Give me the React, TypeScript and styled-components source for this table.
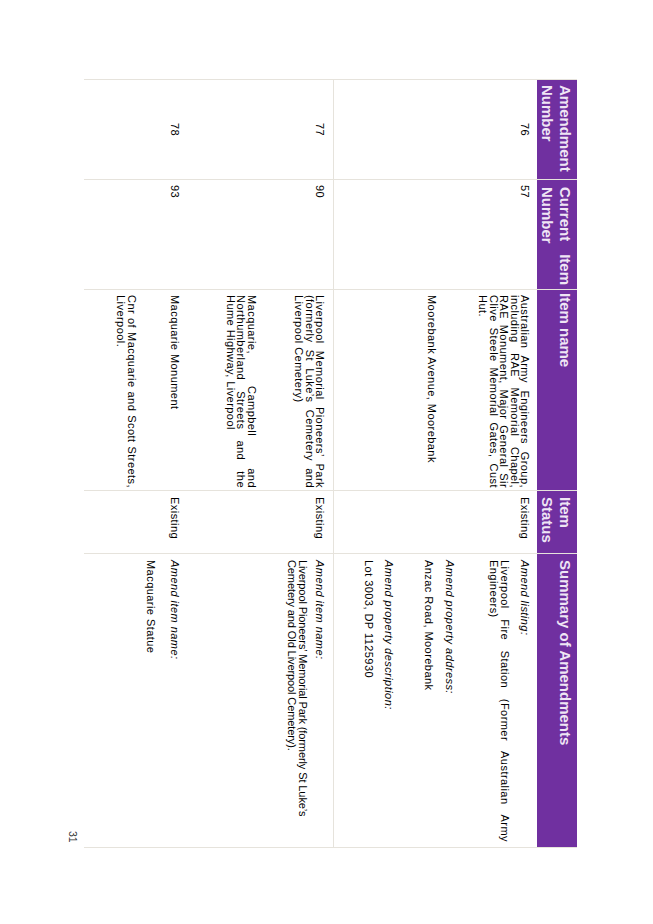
import React from "react";
import styled, { createGlobalStyle } from "styled-components";

const LINE = "#e6e3dc";
const PURPLE = "#7030a0";
const HEAD_TEXT = "#efe5f5";

const GlobalStyle = createGlobalStyle`
  html, body { margin: 0; padding: 0; background: #ffffff; }
  #root { width: 653px; height: 924px; }
`;

const Page = styled.main`
  writing-mode: vertical-rl;
  width: 653px;
  height: 924px;
  box-sizing: border-box;
  padding-block-start: 76px;
  padding-inline-start: 79px;
  background: #ffffff;
  color: #000000;
  font-family: "Liberation Sans", Arial, sans-serif;
  overflow: hidden;
`;

const Table = styled.section`
  inline-size: 769px;
`;

const Row = styled.div<{ $size: number; $pad: number; $divider?: boolean }>`
  --pad: ${(p) => p.$pad}px;
  display: grid;
  grid-template-columns: 100px 110px 201px 63px 295px;
  block-size: ${(p) => p.$size}px;
  box-sizing: border-box;
  border-block-end: ${(p) => (p.$divider ? `1px solid ${LINE}` : "none")};
`;

const Cell = styled.div<{ $center?: boolean; $ps?: number; $pe?: number }>`
  box-sizing: border-box;
  border-inline-start: 1px solid ${LINE};
  padding-block-start: var(--pad);
  padding-inline-start: ${(p) => p.$ps ?? 5}px;
  padding-inline-end: ${(p) => p.$pe ?? 4}px;
  font-size: 11px;
  letter-spacing: 0.45px;
  line-height: 10.5px;
  text-align: ${(p) => (p.$center ? "center" : "start")};
  &:last-child {
    border-inline-end: 1px solid ${LINE};
  }
`;

const HeaderCell = styled(Cell)`
  background: ${PURPLE};
  color: ${HEAD_TEXT};
  font-weight: 700;
  font-size: 15px;
  letter-spacing: 0;
  line-height: 18px;
`;

const Paragraph = styled.p<{ $gap?: number; $italic?: boolean; $tight?: boolean }>`
  margin: 0;
  margin-block-start: ${(p) => p.$gap ?? 0}px;
  font-style: ${(p) => (p.$italic ? "italic" : "normal")};
  letter-spacing: ${(p) => (p.$tight ? "-0.1px" : "inherit")};
`;

const Line = styled.span<{ $justify?: boolean }>`
  display: block;
  text-align-last: ${(p) => (p.$justify ? "justify" : "auto")};
`;

const PageNumber = styled.footer`
  inline-size: 769px;
  box-sizing: border-box;
  margin-block-start: 5px;
  padding-inline-end: 5px;
  text-align: end;
  font-size: 10.5px;
  line-height: 12px;
  color: #333333;
`;

type Para = { lines: string[]; italic?: boolean; gap?: number; justify?: boolean; tight?: boolean };

type RowData = {
  size: number;
  pad: number;
  divider?: boolean;
  amend: string;
  current: string;
  name: Para[];
  status: string;
  summary: Para[];
};

const rows: RowData[] = [
  {
    size: 204,
    pad: 7,
    divider: true,
    amend: "76",
    current: "57",
    name: [
      {
        lines: [
          "Australian Army Engineers Group,",
          "including RAE Memorial Chapel,",
          "RAE Monument, Major General Sir",
          "Clive Steele Memorial Gates, Cust",
          "Hut.",
        ],
      },
      { lines: ["Moorebank Avenue, Moorebank"], gap: 41 },
    ],
    status: "Existing",
    summary: [
      { lines: ["Amend listing:"], italic: true },
      { lines: ["Liverpool Fire Station (Former Australian Army", "Engineers)"], gap: 10 },
      { lines: ["Amend property address:"], italic: true, gap: 34 },
      { lines: ["Anzac Road, Moorebank"], gap: 10 },
      { lines: ["Amend property description:"], italic: true, gap: 29.5 },
      { lines: ["Lot 3003, DP 1125930"], gap: 10 },
    ],
  },
  {
    size: 145,
    pad: 8,
    amend: "77",
    current: "90",
    name: [
      {
        lines: [
          "Liverpool Memorial Pioneers\u2019 Park",
          "(formerly St Luke\u2019s Cemetery and",
          "Liverpool Cemetery)",
        ],
      },
      {
        lines: ["Macquarie, Campbell and", "Northumberland Streets and the", "Hume Highway, Liverpool"],
        gap: 37,
      },
    ],
    status: "Existing",
    summary: [
      { lines: ["Amend item name:"], italic: true },
      {
        lines: [
          "Liverpool Pioneers\u2019 Memorial Park (formerly St Luke\u2019s",
          "Cemetery and Old Liverpool Cemetery).",
        ],
        gap: 7,
        justify: false,
        tight: true,
      },
    ],
  },
  {
    size: 104,
    pad: 8,
    amend: "78",
    current: "93",
    name: [
      { lines: ["Macquarie Monument"] },
      { lines: ["Cnr of Macquarie and Scott Streets,", "Liverpool."], gap: 33 },
    ],
    status: "Existing",
    summary: [
      { lines: ["Amend item name:"], italic: true },
      { lines: ["Macquarie Statue"], gap: 14 },
    ],
  },
];

function Lines({ lines, justify = true }: { lines: string[]; justify?: boolean }) {
  return (
    <>
      {lines.map((l, i) => (
        <Line key={i} $justify={justify && i < lines.length - 1}>
          {l}
        </Line>
      ))}
    </>
  );
}

function Paragraphs({ items }: { items: Para[] }) {
  return (
    <>
      {items.map((p, i) => (
        <Paragraph key={i} $gap={p.gap} $italic={p.italic} $tight={p.tight}>
          <Lines lines={p.lines} justify={p.justify ?? true} />
        </Paragraph>
      ))}
    </>
  );
}

export default function App() {
  return (
    <>
      <GlobalStyle />
      <Page>
        <Table>
          <Row $size={40} $pad={3}>
            <HeaderCell>
              <Lines lines={["Amendment", "Number"]} />
            </HeaderCell>
            <HeaderCell $ps={7}>
              <Lines lines={["Current Item", "Number"]} />
            </HeaderCell>
            <HeaderCell $ps={3}>
              <Lines lines={["Item name"]} />
            </HeaderCell>
            <HeaderCell $ps={6}>
              <Lines lines={["Item", "Status"]} />
            </HeaderCell>
            <HeaderCell $ps={6}>
              <Lines lines={["Summary of Amendments"]} />
            </HeaderCell>
          </Row>
          {rows.map((r) => (
            <Row key={r.amend} $size={r.size} $pad={r.pad} $divider={r.divider}>
              <Cell $center>{r.amend}</Cell>
              <Cell>{r.current}</Cell>
              <Cell $pe={2}>
                <Paragraphs items={r.name} />
              </Cell>
              <Cell $ps={6}>{r.status}</Cell>
              <Cell $ps={6} $pe={5}>
                <Paragraphs items={r.summary} />
              </Cell>
            </Row>
          ))}
        </Table>
        <PageNumber>31</PageNumber>
      </Page>
    </>
  );
}
